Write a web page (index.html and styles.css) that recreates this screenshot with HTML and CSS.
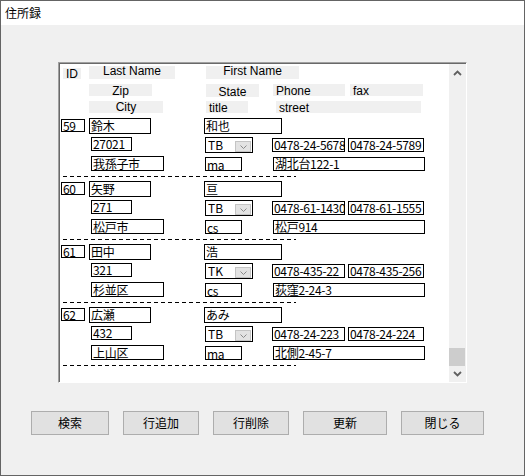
FILE: index.html
```html
<!DOCTYPE html>
<html lang="ja">
<head>
<meta charset="utf-8">
<title>住所録</title>
<link rel="stylesheet" href="styles.css">
</head>
<body>
<div class="win">
  <div class="titlebar">住所録</div>
  <div class="client">
    <div class="panel">
      <div class="list">
        <div class="head">
          <div class="line h1">
            <span class="lbl c1 lid">ID</span>
            <span class="lbl c2 lln">Last Name</span>
            <span class="lbl c3 lfn">First Name</span>
          </div>
          <div class="line h2">
            <span class="lbl c2 lzip">Zip</span>
            <span class="lbl c3 lstate">State</span>
            <span class="lbl c4 lphone left">Phone</span>
            <span class="lbl c5 lfax left">fax</span>
          </div>
          <div class="line h3">
            <span class="lbl c2 lcity">City</span>
            <span class="lbl c3 ltitle left">title</span>
            <span class="lbl c4 lstreet left">street</span>
          </div>
        </div>

        <div class="rec">
          <div class="line ra">
            <span class="fld c1 fid">59</span>
            <span class="fld c2 fln">鈴木</span>
            <span class="fld c3 ffn">和也</span>
          </div>
          <div class="line rb">
            <span class="fld c2 fzip">27021</span>
            <span class="combo c3"><span class="combo-val">TB</span><span class="combo-btn"><svg width="7" height="4" viewBox="0 0 7 4"><polyline points="0.5,0.5 3.5,3.5 6.5,0.5" fill="none" stroke="#8a8a8a" stroke-width="1"/></svg></span></span>
            <span class="fld c4 fphone">0478-24-5678</span>
            <span class="fld c5 ffax">0478-24-5789</span>
          </div>
          <div class="line rc">
            <span class="fld c2 fcity">我孫子市</span>
            <span class="fld c3 ftitle">ma</span>
            <span class="fld c4 fstreet">湖北台122-1</span>
          </div>
          <div class="dash"></div>
        </div>

        <div class="rec">
          <div class="line ra">
            <span class="fld c1 fid">60</span>
            <span class="fld c2 fln">矢野</span>
            <span class="fld c3 ffn">亘</span>
          </div>
          <div class="line rb">
            <span class="fld c2 fzip">271</span>
            <span class="combo c3"><span class="combo-val">TB</span><span class="combo-btn"><svg width="7" height="4" viewBox="0 0 7 4"><polyline points="0.5,0.5 3.5,3.5 6.5,0.5" fill="none" stroke="#8a8a8a" stroke-width="1"/></svg></span></span>
            <span class="fld c4 fphone">0478-61-1430</span>
            <span class="fld c5 ffax">0478-61-1555</span>
          </div>
          <div class="line rc">
            <span class="fld c2 fcity">松戸市</span>
            <span class="fld c3 ftitle">cs</span>
            <span class="fld c4 fstreet">松戸914</span>
          </div>
          <div class="dash"></div>
        </div>

        <div class="rec">
          <div class="line ra">
            <span class="fld c1 fid">61</span>
            <span class="fld c2 fln">田中</span>
            <span class="fld c3 ffn">浩</span>
          </div>
          <div class="line rb">
            <span class="fld c2 fzip">321</span>
            <span class="combo c3"><span class="combo-val">TK</span><span class="combo-btn"><svg width="7" height="4" viewBox="0 0 7 4"><polyline points="0.5,0.5 3.5,3.5 6.5,0.5" fill="none" stroke="#8a8a8a" stroke-width="1"/></svg></span></span>
            <span class="fld c4 fphone">0478-435-22</span>
            <span class="fld c5 ffax">0478-435-256</span>
          </div>
          <div class="line rc">
            <span class="fld c2 fcity">杉並区</span>
            <span class="fld c3 ftitle">cs</span>
            <span class="fld c4 fstreet">荻窪2-24-3</span>
          </div>
          <div class="dash"></div>
        </div>

        <div class="rec">
          <div class="line ra">
            <span class="fld c1 fid">62</span>
            <span class="fld c2 fln">広瀬</span>
            <span class="fld c3 ffn">あみ</span>
          </div>
          <div class="line rb">
            <span class="fld c2 fzip">432</span>
            <span class="combo c3"><span class="combo-val">TB</span><span class="combo-btn"><svg width="7" height="4" viewBox="0 0 7 4"><polyline points="0.5,0.5 3.5,3.5 6.5,0.5" fill="none" stroke="#8a8a8a" stroke-width="1"/></svg></span></span>
            <span class="fld c4 fphone">0478-24-223</span>
            <span class="fld c5 ffax">0478-24-224</span>
          </div>
          <div class="line rc">
            <span class="fld c2 fcity">上山区</span>
            <span class="fld c3 ftitle">ma</span>
            <span class="fld c4 fstreet">北側2-45-7</span>
          </div>
          <div class="dash"></div>
        </div>
      </div>

      <div class="sb">
        <div class="sb-btn sb-up"><svg width="9" height="6" viewBox="0 0 9 6"><polyline points="1,5 4.5,1.5 8,5" fill="none" stroke="#606060" stroke-width="1.8"/></svg></div>
        <div class="sb-track"><div class="sb-thumb"></div></div>
        <div class="sb-btn sb-down"><svg width="9" height="6" viewBox="0 0 9 6"><polyline points="1,1 4.5,4.5 8,1" fill="none" stroke="#606060" stroke-width="1.8"/></svg></div>
      </div>
    </div>

    <div class="buttons">
      <button class="btn b-search">検索</button>
      <button class="btn b-add">行追加</button>
      <button class="btn b-del">行削除</button>
      <button class="btn b-upd">更新</button>
      <button class="btn b-close">閉じる</button>
    </div>
  </div>
</div>
</body>
</html>
```

FILE: styles.css
```css
* { box-sizing: border-box; }

html, body {
  margin: 0;
  padding: 0;
  background: #f0f0f0;
}

body {
  font-family: "Noto Sans CJK JP", "Liberation Sans", sans-serif;
  color: #000;
}

.win {
  width: 525px;
  height: 476px;
  border: 1px solid #646464;
  background: #f0f0f0;
  display: flex;
  flex-direction: column;
}

.titlebar {
  height: 24px;
  background: #fff;
  font-size: 12px;
  line-height: 24px;
  padding-left: 4px;
  color: #000;
}

.client {
  flex: 1;
  display: flex;
  flex-direction: column;
}

/* ---------- panel ---------- */
.panel {
  margin: 37px 0 0 57px;
  width: 409px;
  height: 321px;
  border: 1px solid;
  border-color: #a0a0a0 #ffffff #ffffff #a0a0a0;
  box-shadow: inset 1px 1px 0 #696969;
  padding: 1px 0 0 1px;
  display: flex;
}

.list {
  flex: 1;
  background: #fff;
  overflow: hidden;
}

.line {
  display: grid;
  grid-template-columns: 29px 115px 68px 76px 1fr;
  grid-template-rows: auto;
  align-items: start;
}

.c1, .c2, .c3, .c4, .c5 { grid-row: 1; }
.c1 { grid-column: 1; }
.c2 { grid-column: 2; }
.c3 { grid-column: 3; }
.c4 { grid-column: 4; }
.c5 { grid-column: 5; }

/* ---------- header labels ---------- */
.head { padding-top: 2px; }
.h2 { margin-top: 5px; }
.h3 { margin-top: 4px; }

.lbl {
  display: block;
  background: #f0f0f0;
  font-family: "Liberation Sans", "Noto Sans CJK JP", sans-serif;
  font-size: 12px;
  height: 12px;
  line-height: 12px;
  text-align: center;
  white-space: nowrap;
}
.lbl.left { text-align: left; padding-left: 3px; }

.lid { margin-left: 3px; width: 18px; height: 11px; line-height: 12px; align-self: end; }
.lln { width: 86px; height: 13px; line-height: 11px; }
.lfn { margin-left: 2px; width: 93px; height: 13px; line-height: 11px; }

.lzip { width: 63px; line-height: 14px; }
.lstate { margin-left: 2px; width: 53px; line-height: 16px; height: 13px; }
.lphone { margin-left: 1px; width: 72px; line-height: 14px; }
.lfax { margin-left: 2px; width: 73px; line-height: 14px; }

.lcity { width: 74px; }
.ltitle { margin-left: 2px; width: 42px; padding-left: 2px; line-height: 15px; }
.lstreet { margin-left: 4px; width: 145px; padding-left: 1px; line-height: 15px; }

/* ---------- records ---------- */
.rec { margin-bottom: 4px; }
.head + .rec { margin-top: 5px; }

.rb, .rc { margin-top: 3px; }

.fld {
  display: block;
  background: #fff;
  border: 1px solid #000;
  font-size: 12px;
  line-height: 12px;
  letter-spacing: -0.3px;
  padding: 0 0 0 1px;
  white-space: nowrap;
  height: 14px;
}

.fid { margin: 1px 0 0 1px; width: 24px; height: 13px; line-height: 11px; }
.fln { width: 62px; height: 16px; line-height: 13px; }
.ffn { width: 78px; height: 16px; line-height: 13px; }

.fzip { margin-left: 2px; width: 41px; }
.fphone { margin-top: 1px; width: 73px; overflow: hidden; }
.ffax { margin-top: 1px; width: 76px; overflow: hidden; }

.fcity { margin-left: 2px; width: 73px; height: 15px; line-height: 14px; }
.ftitle { margin: 1px 0 0 1px; width: 37px; line-height: 13px; }
.fstreet { margin: 1px 0 0 1px; width: 152px; }

.combo {
  margin-left: 1px;
  width: 48px;
  height: 16px;
  border: 1px solid #000;
  background: #fff;
  display: flex;
  align-items: center;
  justify-content: space-between;
  padding: 0 1px 0 2px;
}
.combo-val {
  font-size: 12px;
  line-height: 12px;
}
.combo-btn {
  width: 16px;
  height: 11px;
  margin-top: 2px;
  background: #e3e3e3;
  border: 1px solid #c4c4c4;
  display: flex;
  align-items: center;
  justify-content: center;
  padding-top: 2px;
}

.dash {
  margin: 5px 0 0 3px;
  width: 233px;
  height: 1px;
  background: repeating-linear-gradient(90deg, #000 0 4px, transparent 4px 7px);
}

/* ---------- scrollbar ---------- */
.sb {
  width: 17px;
  background: #f0f0f0;
  display: flex;
  flex-direction: column;
}
.sb-btn {
  height: 17px;
  display: flex;
  align-items: center;
  justify-content: center;
}
.sb-down { height: 16px; }
.sb-track {
  flex: 1;
  display: flex;
  flex-direction: column;
  justify-content: flex-end;
}
.sb-thumb {
  height: 18px;
  margin: 0 1px 0 0;
  background: #cdcdcd;
}

/* ---------- buttons ---------- */
.buttons {
  margin: 28px 0 0 30px;
  display: flex;
  gap: 14px;
}
.btn {
  height: 24px;
  background: #e1e1e1;
  border: 1px solid #adadad;
  font-family: "Noto Sans CJK JP", sans-serif;
  font-size: 12px;
  color: #000;
  padding: 0;
  line-height: 20px;
}
.b-search { width: 78px; }
.b-add { width: 76px; }
.b-del { width: 76px; }
.b-upd { width: 84px; }
.b-close { width: 83px; }
```
